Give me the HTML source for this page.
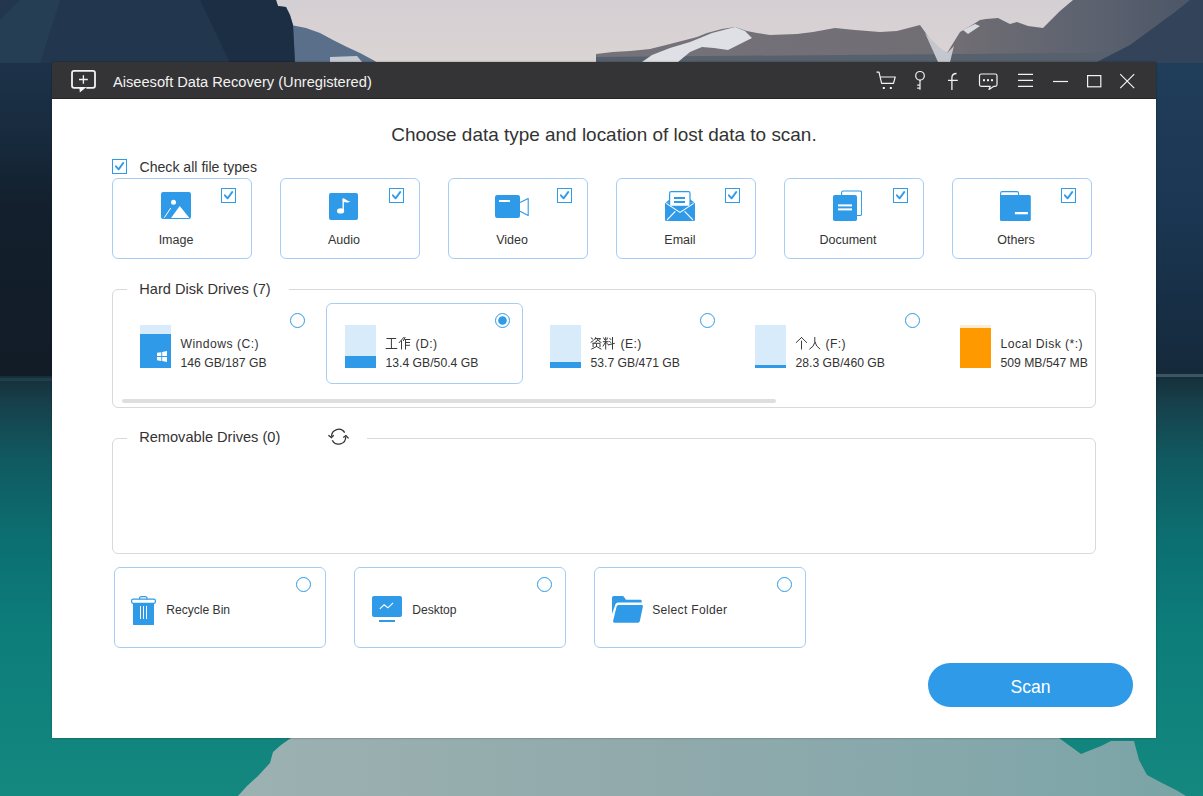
<!DOCTYPE html>
<html><head><meta charset="utf-8">
<style>
*{margin:0;padding:0;box-sizing:border-box}
html,body{width:1203px;height:796px;overflow:hidden;font-family:"Liberation Sans",sans-serif}
body{position:relative;background:#0f7a78}
#bg{position:absolute;left:0;top:0}
.win{position:absolute;left:52px;top:62px;width:1104px;height:676px;background:#fff;box-shadow:0 0 2px rgba(0,0,0,.35)}
.tb{position:absolute;left:0;top:0;width:1104px;height:37px;background:#343436;border-bottom:1px solid #252526}
.t{position:absolute;white-space:nowrap;color:#333;line-height:1}
.abs{position:absolute}
</style></head><body>
<svg id="bg" width="1203" height="796" viewBox="0 0 1203 796">
<defs>
<linearGradient id="water" x1="0" y1="376" x2="0" y2="796" gradientUnits="userSpaceOnUse">
<stop offset="0" stop-color="#152f3b"/>
<stop offset="0.06" stop-color="#173f4a"/>
<stop offset="0.2" stop-color="#105a61"/>
<stop offset="0.38" stop-color="#0c6e70"/>
<stop offset="0.6" stop-color="#0d7d7a"/>
<stop offset="1" stop-color="#14887f"/>
</linearGradient>
<linearGradient id="forestL" x1="0" y1="62" x2="0" y2="380" gradientUnits="userSpaceOnUse">
<stop offset="0" stop-color="#1d3249"/>
<stop offset="0.25" stop-color="#172a3d"/>
<stop offset="0.45" stop-color="#131f2c"/>
<stop offset="1" stop-color="#111c27"/>
</linearGradient>
<linearGradient id="forestR" x1="0" y1="62" x2="0" y2="376" gradientUnits="userSpaceOnUse">
<stop offset="0" stop-color="#203d5a"/>
<stop offset="0.5" stop-color="#1b3652"/>
<stop offset="0.8" stop-color="#172e44"/>
<stop offset="1" stop-color="#15293a"/>
</linearGradient>
<linearGradient id="refl" x1="239" y1="0" x2="1185" y2="0" gradientUnits="userSpaceOnUse">
<stop offset="0" stop-color="#9cb1b1"/>
<stop offset="0.4" stop-color="#92aaac"/>
<stop offset="0.75" stop-color="#86a8ab"/>
<stop offset="1" stop-color="#7aa4a6"/>
</linearGradient>
<linearGradient id="sky" x1="0" y1="0" x2="0" y2="62" gradientUnits="userSpaceOnUse">
<stop offset="0" stop-color="#d4cfd3"/>
<stop offset="1" stop-color="#dbd4d4"/>
</linearGradient>
<linearGradient id="rmtn" x1="980" y1="0" x2="1203" y2="62" gradientUnits="userSpaceOnUse">
<stop offset="0" stop-color="#6e6a6b"/>
<stop offset="0.45" stop-color="#5f6268"/>
<stop offset="1" stop-color="#2f4052"/>
</linearGradient>
<linearGradient id="ridge" x1="596" y1="0" x2="1203" y2="0" gradientUnits="userSpaceOnUse">
<stop offset="0" stop-color="#75727a"/>
<stop offset="0.6" stop-color="#706d73"/>
<stop offset="0.8" stop-color="#5e6370"/>
<stop offset="1" stop-color="#4a5566"/>
</linearGradient>
</defs>
<rect x="0" y="0" width="1203" height="63" fill="url(#sky)"/>
<rect x="0" y="62" width="602" height="320" fill="url(#forestL)"/>
<rect x="602" y="62" width="601" height="316" fill="url(#forestR)"/>
<rect x="0" y="376" width="1203" height="420" fill="url(#water)"/>
<rect x="0" y="378" width="52" height="3" fill="#3a5560" opacity="0.35"/>
<rect x="1150" y="374" width="53" height="3" fill="#4a6a70" opacity="0.7"/>
<polygon points="291,738 1059,738 1070,746 1081,754 1101,746 1111,741 1134,741 1139,760 1147,775 1162,783 1176,790 1186,796 238,796 247,786 258,776 270,763 273,752 281,745" fill="url(#refl)"/>
<!-- distant blue mountain -->
<polygon points="291,25 306,28 320,33 333,40 347,47 360,53 373,60 378,63 291,63" fill="#5a708a"/>
<polygon points="330,57 357,56 362,62 330,62" fill="#c5cad2"/>
<!-- left dark mountain -->
<polygon points="0,0 276,0 278,6 286,7 290,15 293,25 295,63 0,63" fill="#22374d"/>
<polygon points="0,20 20,0 60,0 40,63 0,63" fill="#2c465e" opacity="0.45"/>
<polygon points="200,0 276,0 278,6 286,7 290,15 293,25 295,63 230,63" fill="#17283c" opacity="0.55"/>
<!-- snowy ridge -->
<polygon points="596,54 613,52 630,51 650,49 670,44 697,37 707,33 722,29 735,27 747,31 757,33 770,35 797,34 813,32 835,28 855,30 880,32 897,31 920,25 930,39 938,48 947,53 960,32 972,25 980,20 986,19 998,18 1010,24 1017,22 1028,26 1043,28 1060,11 1073,0 1203,0 1203,63 596,63" fill="url(#ridge)"/>
<polygon points="596,57 1203,52 1203,63 596,63" fill="#57606d"/>
<polygon points="642,62 652,55 670,48 690,42 700,38 712,33 735,27 745,31 752,38 740,44 728,50 714,48 702,47 690,52 678,62" fill="#dfe0e5"/>
<polygon points="925,33 932,40 940,48 947,53 954,46 950,62 938,62" fill="#c4c8ce"/>
<polygon points="963,30 975,24 980,26 968,34" fill="#d9dadf"/>
<!-- right mountain -->

<polygon points="1095,63 1130,45 1175,12 1190,0 1203,0 1203,63" fill="#33445a"/>
</svg>

<div class="win">
  <div class="tb"></div>
</div>
<svg class="abs" style="left:68px;top:67px" width="32" height="28" viewBox="0 0 32 28"><path d="M6 3.9 H25 Q27 3.9 27 5.9 V18.8 Q27 20.8 25 20.8 H18.3 M12 20.8 H6 Q4 20.8 4 18.8 V5.9 Q4 3.9 6 3.9" fill="none" stroke="#f2f2f2" stroke-width="1.8" stroke-linejoin="round"/><path d="M11.3 20 H18.6 L11.8 25.5 Z" fill="#f2f2f2"/><path d="M15.4 8.2 V16.8 M11 12.5 H19.8" stroke="#f2f2f2" stroke-width="1.3"/></svg>
<div class="t" style="left:113.00px;top:74.80px;font-size:14.65px;color:#f2f2f2;">Aiseesoft Data Recovery (Unregistered)</div>
<svg class="abs" style="left:872px;top:68px" width="28" height="24" viewBox="0 0 28 24"><path d="M4.5 4.2 H7 L9.6 15.4 H21.5 L23.2 9 H8.2" fill="none" stroke="#f2f2f2" stroke-width="1.2" stroke-linejoin="round"/><rect x="10.8" y="19" width="2" height="2" fill="#f2f2f2"/><rect x="17.8" y="19" width="2" height="2" fill="#f2f2f2"/></svg>
<svg class="abs" style="left:910px;top:68px" width="20" height="24" viewBox="0 0 20 24"><circle cx="10" cy="7.8" r="4.3" fill="none" stroke="#f2f2f2" stroke-width="1.2"/><path d="M10 12.1 V21.8 M7.2 17.2 H10 M7.2 20.2 H10" fill="none" stroke="#f2f2f2" stroke-width="1.2"/></svg>
<svg class="abs" style="left:942px;top:68px" width="20" height="24" viewBox="0 0 20 24"><path d="M9.9 22 V9.8 Q9.9 5.5 14.5 5.5 M6 12.3 H15.8" fill="none" stroke="#f2f2f2" stroke-width="1.3"/></svg>
<svg class="abs" style="left:975px;top:68px" width="26" height="24" viewBox="0 0 26 24"><path d="M6.3 6 H20.2 Q22 6 22 7.8 V16.6 Q22 18.4 20.2 18.4 H18.5 L14 21.4 L15.2 18.4 H6.3 Q4.5 18.4 4.5 16.6 V7.8 Q4.5 6 6.3 6 Z" fill="none" stroke="#f2f2f2" stroke-width="1.2" stroke-linejoin="round"/><rect x="8" y="11.2" width="2" height="2" fill="#f2f2f2"/><rect x="12" y="11.2" width="2" height="2" fill="#f2f2f2"/><rect x="16" y="11.2" width="2" height="2" fill="#f2f2f2"/></svg>
<svg class="abs" style="left:1015px;top:68px" width="20" height="24" viewBox="0 0 20 24"><path d="M3 6.4 H18 M3 12.4 H18 M3 18.4 H18" stroke="#f2f2f2" stroke-width="1.2"/></svg>
<svg class="abs" style="left:1050px;top:68px" width="22" height="24" viewBox="0 0 22 24"><path d="M3 13.5 H18" stroke="#f2f2f2" stroke-width="1.2"/></svg>
<svg class="abs" style="left:1084px;top:68px" width="22" height="24" viewBox="0 0 22 24"><rect x="3.6" y="7.6" width="13.2" height="11.2" fill="none" stroke="#f2f2f2" stroke-width="1.2"/></svg>
<svg class="abs" style="left:1117px;top:68px" width="22" height="24" viewBox="0 0 22 24"><path d="M3.2 6.2 L17.2 20.2 M17.2 6.2 L3.2 20.2" stroke="#f2f2f2" stroke-width="1.2"/></svg>
<div class="t" style="left:52px;width:1104px;text-align:center;top:125.56px;font-size:18.95px;color:#333">Choose data type and location of lost data to scan.</div>
<svg class="abs" style="left:112px;top:159px" width="15" height="15" viewBox="0 0 15 15"><rect x="0.5" y="0.5" width="14" height="14" fill="none" stroke="#2e9ae8"/><path d="M3.9 7.3 L6.6 10.4 L11.3 3.9" fill="none" stroke="#2e9ae8" stroke-width="1.8" stroke-linecap="round" stroke-linejoin="round"/></svg>
<div class="t" style="left:139.50px;top:160.06px;font-size:14.1px;color:#333;">Check all file types</div>
<div class="abs" style="left:112px;top:178px;width:140px;height:81px;border:1px solid #a6cdf4;border-radius:6px"></div>
<svg class="abs" style="left:161px;top:192px" width="30" height="27" viewBox="0 0 30 27"><rect x="0" y="0" width="30" height="27" rx="2.2" fill="#2e9ae8"/><circle cx="12.5" cy="10.3" r="2.5" fill="#fff"/><path d="M10 26 L18.7 14 L28.4 26 Z" fill="#fff"/><path d="M3.3 25.7 L9.7 16.1" stroke="#fff" stroke-width="1"/></svg>
<svg class="abs" style="left:221px;top:188px" width="15" height="15" viewBox="0 0 15 15"><rect x="0.5" y="0.5" width="14" height="14" fill="none" stroke="#2e9ae8"/><path d="M3.9 7.3 L6.6 10.4 L11.3 3.9" fill="none" stroke="#2e9ae8" stroke-width="1.8" stroke-linecap="round" stroke-linejoin="round"/></svg>
<div class="t" style="left:112px;width:128px;text-align:center;top:234.22px;font-size:12.5px;color:#333">Image</div>
<div class="abs" style="left:280px;top:178px;width:140px;height:81px;border:1px solid #a6cdf4;border-radius:6px"></div>
<svg class="abs" style="left:329px;top:193px" width="29" height="27" viewBox="0 0 29 27"><rect x="0" y="0" width="29" height="27" rx="2" fill="#2e9ae8"/><ellipse cx="11.6" cy="17.9" rx="3.6" ry="2.7" fill="#fff"/><path d="M14.2 18 V5.8" stroke="#fff" stroke-width="1.4"/><path d="M13.6 5.2 Q16 5.5 17.5 7 Q19.5 8.6 21.5 8.4 Q19 10 16.5 9.2 L14 9" fill="#fff"/></svg>
<svg class="abs" style="left:389px;top:188px" width="15" height="15" viewBox="0 0 15 15"><rect x="0.5" y="0.5" width="14" height="14" fill="none" stroke="#2e9ae8"/><path d="M3.9 7.3 L6.6 10.4 L11.3 3.9" fill="none" stroke="#2e9ae8" stroke-width="1.8" stroke-linecap="round" stroke-linejoin="round"/></svg>
<div class="t" style="left:280px;width:128px;text-align:center;top:234.22px;font-size:12.5px;color:#333">Audio</div>
<div class="abs" style="left:448px;top:178px;width:140px;height:81px;border:1px solid #a6cdf4;border-radius:6px"></div>
<svg class="abs" style="left:495px;top:195px" width="35" height="23" viewBox="0 0 35 23"><rect x="0" y="0" width="25" height="23" rx="2.2" fill="#2e9ae8"/><rect x="4" y="5" width="11" height="2" fill="#fff"/><path d="M25 7.4 L33.2 3.4 V20.6 L25 16.2" fill="none" stroke="#2e9ae8" stroke-width="1.1" stroke-linejoin="round"/></svg>
<svg class="abs" style="left:557px;top:188px" width="15" height="15" viewBox="0 0 15 15"><rect x="0.5" y="0.5" width="14" height="14" fill="none" stroke="#2e9ae8"/><path d="M3.9 7.3 L6.6 10.4 L11.3 3.9" fill="none" stroke="#2e9ae8" stroke-width="1.8" stroke-linecap="round" stroke-linejoin="round"/></svg>
<div class="t" style="left:448px;width:128px;text-align:center;top:234.22px;font-size:12.5px;color:#333">Video</div>
<div class="abs" style="left:616px;top:178px;width:140px;height:81px;border:1px solid #a6cdf4;border-radius:6px"></div>
<svg class="abs" style="left:665px;top:191px" width="30" height="30" viewBox="0 0 30 30"><rect x="0" y="11.5" width="30" height="18.5" rx="1.5" fill="#2e9ae8"/><path d="M0.5 11.5 L6 7.5 H24 L29.5 11.5 Z" fill="#2e9ae8"/><rect x="4.6" y="0.7" width="20.4" height="14.7" rx="1.5" fill="#fff" stroke="#2e9ae8" stroke-width="1.2"/><rect x="9" y="6" width="11" height="2" fill="#2e9ae8"/><rect x="9" y="10" width="11" height="2" fill="#2e9ae8"/><path d="M1.3 12.4 L15 21.4 L28.7 12.4" fill="none" stroke="#fff" stroke-width="1.1"/><path d="M2 29 L10.3 20.4 M28 29 L19.6 20.4" stroke="#fff" stroke-width="1.1"/></svg>
<svg class="abs" style="left:725px;top:188px" width="15" height="15" viewBox="0 0 15 15"><rect x="0.5" y="0.5" width="14" height="14" fill="none" stroke="#2e9ae8"/><path d="M3.9 7.3 L6.6 10.4 L11.3 3.9" fill="none" stroke="#2e9ae8" stroke-width="1.8" stroke-linecap="round" stroke-linejoin="round"/></svg>
<div class="t" style="left:616px;width:128px;text-align:center;top:234.22px;font-size:12.5px;color:#333">Email</div>
<div class="abs" style="left:784px;top:178px;width:140px;height:81px;border:1px solid #a6cdf4;border-radius:6px"></div>
<svg class="abs" style="left:833px;top:190px" width="29" height="31" viewBox="0 0 29 31"><rect x="8.6" y="1" width="20" height="24.5" rx="1.6" fill="#fff" stroke="#2e9ae8" stroke-width="1.1"/><rect x="0" y="5" width="24" height="26" rx="1.8" fill="#2e9ae8"/><rect x="5" y="14.4" width="14" height="2" fill="#fff"/><rect x="5" y="18.4" width="14" height="2" fill="#fff"/></svg>
<svg class="abs" style="left:893px;top:188px" width="15" height="15" viewBox="0 0 15 15"><rect x="0.5" y="0.5" width="14" height="14" fill="none" stroke="#2e9ae8"/><path d="M3.9 7.3 L6.6 10.4 L11.3 3.9" fill="none" stroke="#2e9ae8" stroke-width="1.8" stroke-linecap="round" stroke-linejoin="round"/></svg>
<div class="t" style="left:784px;width:128px;text-align:center;top:234.22px;font-size:12.5px;color:#333">Document</div>
<div class="abs" style="left:952px;top:178px;width:140px;height:81px;border:1px solid #a6cdf4;border-radius:6px"></div>
<svg class="abs" style="left:1000px;top:190px" width="31" height="31" viewBox="0 0 31 31"><rect x="0.6" y="1.6" width="18" height="7" rx="1.6" fill="#fff" stroke="#2e9ae8" stroke-width="1.1"/><rect x="0" y="5" width="30.8" height="26" rx="1.6" fill="#2e9ae8"/><rect x="14.9" y="22" width="13" height="2.3" fill="#fff"/></svg>
<svg class="abs" style="left:1061px;top:188px" width="15" height="15" viewBox="0 0 15 15"><rect x="0.5" y="0.5" width="14" height="14" fill="none" stroke="#2e9ae8"/><path d="M3.9 7.3 L6.6 10.4 L11.3 3.9" fill="none" stroke="#2e9ae8" stroke-width="1.8" stroke-linecap="round" stroke-linejoin="round"/></svg>
<div class="t" style="left:952px;width:128px;text-align:center;top:234.22px;font-size:12.5px;color:#333">Others</div>
<div class="abs" style="left:112px;top:289px;width:984px;height:119px;border:1px solid #d9d9d9;border-radius:6px"></div>
<div class="abs" style="left:127px;top:287px;width:162px;height:4px;background:#fff"></div>
<div class="t" style="left:139.30px;top:281.84px;font-size:14.6px;color:#333;">Hard Disk Drives (7)</div>
<div class="abs" style="left:112px;top:438px;width:984px;height:116px;border:1px solid #d9d9d9;border-radius:6px"></div>
<div class="abs" style="left:127px;top:436px;width:240px;height:4px;background:#fff"></div>
<div class="t" style="left:139.20px;top:430.24px;font-size:14.6px;color:#333;">Removable Drives (0)</div>
<svg class="abs" style="left:326px;top:427px" width="24" height="20" viewBox="0 0 24 20"><path d="M5.6 9.6 A7.1 7.1 0 0 1 18.7 5.6" fill="none" stroke="#333" stroke-width="1.3"/><path d="M2.4 8.3 L5.4 10.6 L7.7 8.3" fill="none" stroke="#333" stroke-width="1.3"/><path d="M6.3 13.2 A7.1 7.1 0 0 0 19.7 9.6" fill="none" stroke="#333" stroke-width="1.3"/><path d="M17.3 10.6 L19.9 8.6 L22.6 11.4" fill="none" stroke="#333" stroke-width="1.3"/></svg>
<div class="abs" style="left:326px;top:303px;width:197px;height:81px;border:1px solid #a6cdf4;border-radius:6px"></div>
<svg class="abs" style="left:140px;top:325px" width="31" height="43" viewBox="0 0 31 43"><rect x="0" y="0" width="31" height="43" fill="#d7ebfb"/><rect x="0" y="9" width="31" height="34" fill="#2e9ae8"/><path d="M17 27.8 L21.3 27.2 V31.1 H17 Z M22.2 27.1 L27 26.1 V31.1 H22.2 Z M17 32 H21.3 V35.9 L17 35.3 Z M22.2 32 H27 V37 L22.2 36.1 Z" fill="#fff"/></svg>
<div class="t" style="left:180.50px;top:337.87px;font-size:12.2px;color:#333;letter-spacing:0.45px">Windows (C:)</div>
<div class="t" style="left:180.50px;top:356.67px;font-size:12.2px;color:#333;">146 GB/187 GB</div>
<svg class="abs" style="left:290px;top:313px" width="15" height="15" viewBox="0 0 15 15"><circle cx="7.5" cy="7.5" r="7" fill="#fff" stroke="#2e9ae8" stroke-width="1"/></svg>
<svg class="abs" style="left:345px;top:325px" width="31" height="43" viewBox="0 0 31 43"><rect x="0" y="0" width="31" height="43" fill="#d7ebfb"/><rect x="0" y="31" width="31" height="12" fill="#2e9ae8"/></svg>
<svg class="abs" style="left:385px;top:337px" width="26" height="13" viewBox="0 0 26 13"><g fill="none" stroke="#3a3a3a" stroke-width="1" stroke-linecap="square" transform="translate(0.5,0)"><path d="M1.5 1.5 H10.2 M5.9 1.5 V11.5 M0.7 11.5 H11.2" /><path d="M18.2 0.5 L13.7 5.6 M16 4 V12 M19.5 0.5 L18 3.5 M19.5 2.5 H24.3 M20 2.5 V12 M20 5.5 H24 M20 8.3 H24" /></g></svg>
<div class="t" style="left:415.50px;top:337.87px;font-size:12.2px;color:#333;letter-spacing:0.4px">(D:)</div>
<div class="t" style="left:385.50px;top:356.67px;font-size:12.2px;color:#333;">13.4 GB/50.4 GB</div>
<svg class="abs" style="left:495px;top:313px" width="15" height="15" viewBox="0 0 15 15"><circle cx="7.5" cy="7.5" r="7" fill="#fff" stroke="#2e9ae8" stroke-width="1"/><circle cx="7.5" cy="7.5" r="4.3" fill="#2e9ae8"/></svg>
<svg class="abs" style="left:550px;top:325px" width="31" height="43" viewBox="0 0 31 43"><rect x="0" y="0" width="31" height="43" fill="#d7ebfb"/><rect x="0" y="37" width="31" height="6" fill="#2e9ae8"/></svg>
<svg class="abs" style="left:590px;top:337px" width="26" height="13" viewBox="0 0 26 13"><g fill="none" stroke="#3a3a3a" stroke-width="1" stroke-linecap="square" transform="translate(0.5,0)"><path d="M0.8 1 L2.4 2.2 M0.5 5.2 L2.6 3.8 M5.2 0.5 L4.2 2.6 M5 1.6 H10 L9 3 M7.5 2.2 Q7.2 4.4 4.5 5.5 M7.5 3.2 Q8.2 4.6 10.4 5.4 M2.6 6.3 H9.5 V9.6 M2.6 6.3 V9.6 M6 7.3 V9.5 M5.2 10 L1.2 12 M7 10 L10.5 12" /><path d="M13.2 1 L14 2.6 M17 1 L16.3 2.6 M12.8 4.7 H17.6 M15.2 0.5 V12 M15 5.2 L12.6 9 M15.6 5.5 L17.6 7.5 M19.3 1.4 L20.4 2.6 M19 4.3 L20.1 5.5 M18 7.8 L23.8 6.4 M22 0.5 V12" /></g></svg>
<div class="t" style="left:620.50px;top:337.87px;font-size:12.2px;color:#333;letter-spacing:0.4px">(E:)</div>
<div class="t" style="left:590.50px;top:356.67px;font-size:12.2px;color:#333;">53.7 GB/471 GB</div>
<svg class="abs" style="left:700px;top:313px" width="15" height="15" viewBox="0 0 15 15"><circle cx="7.5" cy="7.5" r="7" fill="#fff" stroke="#2e9ae8" stroke-width="1"/></svg>
<svg class="abs" style="left:755px;top:325px" width="31" height="43" viewBox="0 0 31 43"><rect x="0" y="0" width="31" height="43" fill="#d7ebfb"/><rect x="0" y="40" width="31" height="3" fill="#2e9ae8"/></svg>
<svg class="abs" style="left:795px;top:337px" width="26" height="13" viewBox="0 0 26 13"><g fill="none" stroke="#3a3a3a" stroke-width="1" stroke-linecap="square" transform="translate(0.5,0)"><path d="M6 0.5 L0.8 5.5 M6 0.5 L11.1 5.5 M6 4.2 V12" /><path d="M19.3 0.5 V5.5 Q18.5 9.5 14.3 12 M19.5 5.2 Q20.5 9.5 24.3 12" /></g></svg>
<div class="t" style="left:825.50px;top:337.87px;font-size:12.2px;color:#333;letter-spacing:0.4px">(F:)</div>
<div class="t" style="left:795.50px;top:356.67px;font-size:12.2px;color:#333;">28.3 GB/460 GB</div>
<svg class="abs" style="left:905px;top:313px" width="15" height="15" viewBox="0 0 15 15"><circle cx="7.5" cy="7.5" r="7" fill="#fff" stroke="#2e9ae8" stroke-width="1"/></svg>
<svg class="abs" style="left:960px;top:325px" width="31" height="43" viewBox="0 0 31 43"><rect x="0" y="0" width="31" height="3" fill="#fdebd3"/><rect x="0" y="3" width="31" height="40" fill="#ff9900"/></svg>
<div class="t" style="left:1000.50px;top:337.87px;font-size:12.2px;color:#333;letter-spacing:0.45px">Local Disk (*:)</div>
<div class="t" style="left:1000.50px;top:356.67px;font-size:12.2px;color:#333;">509 MB/547 MB</div>
<div class="abs" style="left:122px;top:399px;width:654px;height:4px;background:#dedede;border-radius:2px"></div>
<div class="abs" style="left:114px;top:567px;width:212px;height:81px;border:1px solid #a6cdf4;border-radius:6px"></div>
<svg class="abs" style="left:131px;top:596px" width="26" height="30" viewBox="0 0 26 30"><rect x="8.5" y="0.6" width="7.6" height="4" rx="2" fill="#fff" stroke="#2e9ae8" stroke-width="1.1"/><rect x="0.6" y="3.2" width="23.8" height="4.2" rx="1.6" fill="#fff" stroke="#2e9ae8" stroke-width="1.2"/><path d="M2 7.3 H23 V28.6 Q23 29 22.5 29 H2.5 Q2 29 2 28.6 Z" fill="#2e9ae8"/><path d="M9.5 10 V23 M12.5 10 V23 M15.5 10 V23" stroke="#fff" stroke-width="1"/></svg>
<div class="t" style="left:166.20px;top:603.96px;font-size:12.1px;color:#333;">Recycle Bin</div>
<svg class="abs" style="left:296px;top:577px" width="15" height="15" viewBox="0 0 15 15"><circle cx="7.5" cy="7.5" r="7" fill="#fff" stroke="#2e9ae8" stroke-width="1"/></svg>
<div class="abs" style="left:354px;top:567px;width:212px;height:81px;border:1px solid #a6cdf4;border-radius:6px"></div>
<svg class="abs" style="left:372px;top:596px" width="30" height="26" viewBox="0 0 30 26"><rect x="0" y="0" width="30" height="21" rx="2" fill="#2e9ae8"/><path d="M7.8 12.8 L12.1 8.8 L15.9 11.8 L21.1 6.8" fill="none" stroke="#fff" stroke-width="1.1"/><rect x="7" y="24" width="16" height="2" fill="#2e9ae8"/></svg>
<div class="t" style="left:412.20px;top:603.96px;font-size:12.1px;color:#333;">Desktop</div>
<svg class="abs" style="left:537px;top:577px" width="15" height="15" viewBox="0 0 15 15"><circle cx="7.5" cy="7.5" r="7" fill="#fff" stroke="#2e9ae8" stroke-width="1"/></svg>
<div class="abs" style="left:594px;top:567px;width:212px;height:81px;border:1px solid #a6cdf4;border-radius:6px"></div>
<svg class="abs" style="left:612px;top:596px" width="32" height="28" viewBox="0 0 32 28"><path d="M0 1.8 Q0 0 1.8 0 H10.5 Q11.5 0 12 1 L14 3.8 H28.3 Q29.7 3.8 29.7 5.2 V6.6 H6.5 Q3.6 6.6 3 9.6 L0 18 Z" fill="#2e9ae8"/><path d="M4.6 10.6 Q5 9 6.6 9 H29.6 Q31.2 9 30.9 10.6 L27.8 25.3 Q27.5 26.7 26 26.7 H2.4 Q0.8 26.7 1.1 25.1 Z" fill="#2e9ae8"/></svg>
<div class="t" style="left:652.20px;top:603.96px;font-size:12.1px;color:#333;letter-spacing:0.3px">Select Folder</div>
<svg class="abs" style="left:777px;top:577px" width="15" height="15" viewBox="0 0 15 15"><circle cx="7.5" cy="7.5" r="7" fill="#fff" stroke="#2e9ae8" stroke-width="1"/></svg>
<div class="abs" style="left:928px;top:663px;width:205px;height:44px;border-radius:22px;background:#2e9ae8"></div>
<div class="t" style="left:928px;width:205px;text-align:center;top:678.70px;font-size:17.6px;color:#fff">Scan</div>
</body></html>
